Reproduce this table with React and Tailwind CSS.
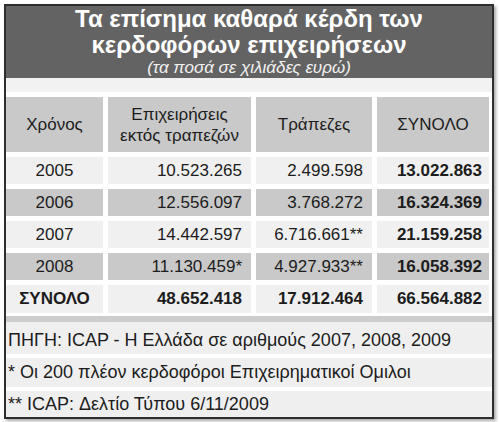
const rows = [
  { year: '2005', a: '10.523.265', b: '2.499.598', t: '13.022.863', dark: false },
  { year: '2006', a: '12.556.097', b: '3.768.272', t: '16.324.369', dark: true },
  { year: '2007', a: '14.442.597', b: '6.716.661**', t: '21.159.258', dark: false },
  { year: '2008', a: '11.130.459*', b: '4.927.933**', t: '16.058.392', dark: true },
];

const notes = [
  { text: 'ΠΗΓΗ: ICAP - Η Ελλάδα σε αριθμούς 2007, 2008, 2009', cls: 'h-[32px] pt-[8px]' },
  { text: '* Οι 200 πλέον κερδοφόροι Επιχειρηματικοί Ομιλοι', cls: 'h-[29px] pt-[4px]' },
  { text: '** ICAP: Δελτίο Τύπου 6/11/2009', cls: 'h-[26px] pt-[3px]' },
];

export default function App() {
  return (
    <div className="w-[500px] h-[422px] bg-white pt-[4px] pl-[4px]" style={{ fontFamily: '"Liberation Sans", Arial, sans-serif' }}>
      <div className="w-[490px] h-[415px] border-2 border-[#2e2e2e] bg-white shadow-[2px_2px_3px_rgba(0,0,0,0.35)] flex flex-col">
        {/* Τίτλος */}
        <div className="h-[72px] bg-[#636363] flex flex-col items-center text-white">
          <div className="text-[24px] font-bold leading-[26px] text-center">
            <div>Τα επίσημα καθαρά κέρδη των</div>
            <div>κερδοφόρων επιχειρήσεων</div>
          </div>
          <div className="mt-[1px] text-[17px] italic leading-[18px] text-[#f2f2f2]">(τα ποσά σε χιλιάδες ευρώ)</div>
        </div>
        <div className="h-[14px] bg-[#f2f2f2]" />

        {/* Πίνακας */}
        <div className="grid grid-cols-[97px_143px_116px_112px] gap-x-[5px] gap-y-[5px] mt-[5px] text-[17px] text-[#1c1c1c]">
          <div className="h-[55px] bg-[#c9c9c9] flex items-center justify-center">Χρόνος</div>
          <div className="h-[55px] bg-[#c9c9c9] flex items-center justify-center text-center leading-[21px]">
            Επιχειρήσεις<br />εκτός τραπεζών
          </div>
          <div className="h-[55px] bg-[#c9c9c9] flex items-center justify-center">Τράπεζες</div>
          <div className="h-[55px] bg-[#c9c9c9] flex items-center justify-center">ΣΥΝΟΛΟ</div>

          {rows.map((r) => {
            const bg = r.dark ? 'bg-[#c9c9c9]' : 'bg-[#f0f0f0]';
            return [
              <div key={r.year + 'y'} className={`h-[27px] ${bg} flex items-center justify-center`}>{r.year}</div>,
              <div key={r.year + 'a'} className={`h-[27px] ${bg} flex items-center justify-end pr-[9px]`}>{r.a}</div>,
              <div key={r.year + 'b'} className={`h-[27px] ${bg} flex items-center justify-end pr-[9px]`}>{r.b}</div>,
              <div key={r.year + 't'} className={`h-[27px] ${bg} flex items-center justify-end pr-[7px] font-bold`}>{r.t}</div>,
            ];
          })}

          <div className="h-[28px] bg-[#f0f0f0] flex items-center justify-center font-bold">ΣΥΝΟΛΟ</div>
          <div className="h-[28px] bg-[#f0f0f0] flex items-center justify-end pr-[9px] font-bold">48.652.418</div>
          <div className="h-[28px] bg-[#f0f0f0] flex items-center justify-end pr-[9px] font-bold">17.912.464</div>
          <div className="h-[28px] bg-[#f0f0f0] flex items-center justify-end pr-[7px] font-bold">66.564.882</div>
        </div>

        {/* Σημειώσεις */}
        <div className="mt-[3px] h-[6px] bg-[#cdcdcd]" />
        <div className="flex flex-col gap-[4px] text-[18px] leading-[20px] text-[#1c1c1c]">
          {notes.map((n, i) => (
            <div key={i} className={`${n.cls} bg-[#efefef] pl-[2px]`}>{n.text}</div>
          ))}
        </div>
      </div>
    </div>
  );
}
